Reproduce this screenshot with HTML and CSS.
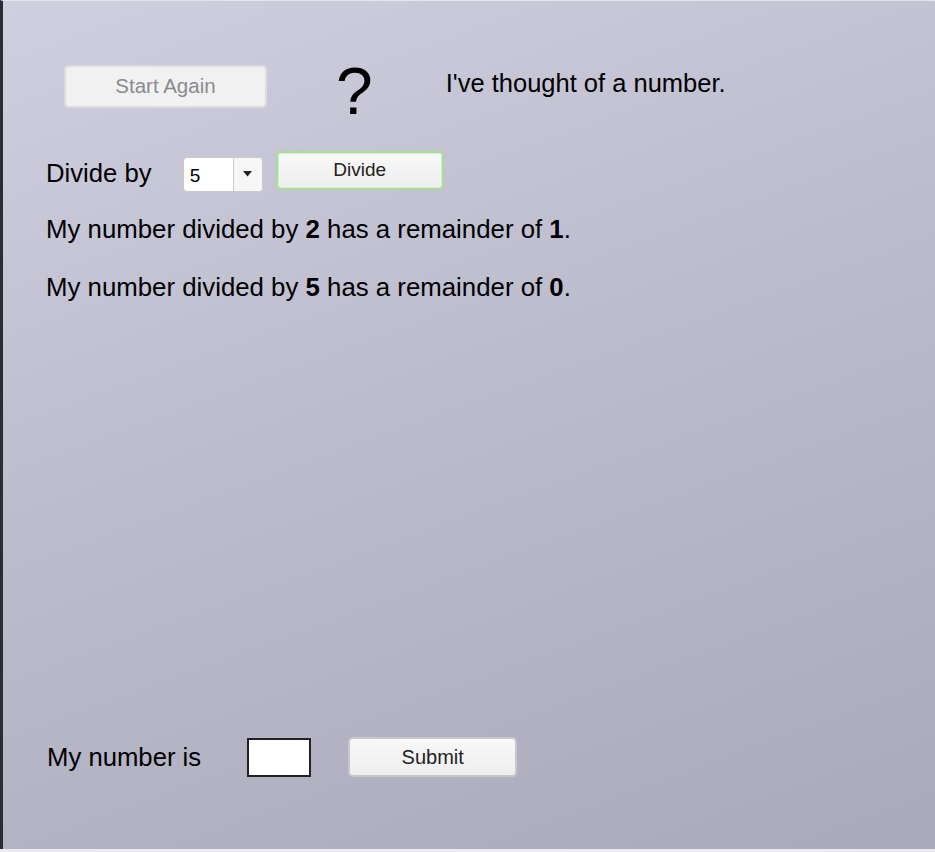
FILE: index.html
```html
<!DOCTYPE html>
<html lang="en">
<head>
  <meta charset="UTF-8" />
  <title>Remainders</title>
  <link rel="stylesheet" href="styles.css">
</head>
<body>

  <!-- GAME AREA -->
  <div class="stage">

    <!-- TOP ROW -->
    <div class="top-row">
      <button class="btn btn-start" disabled>Start Again</button>
      <span class="mystery">?</span>
      <span class="prompt">I've thought of a number.</span>
    </div>

    <!-- DIVIDE CONTROLS -->
    <div class="divide-row">
      <span class="label">Divide by</span>
      <div class="picker">
        <span class="picker-value">5</span>
        <span class="picker-arrow">
          <svg width="9" height="6" viewBox="0 0 9 6"><path d="M0 0h9L4.5 5.5z" fill="#222"/></svg>
        </span>
      </div>
      <button class="btn btn-divide">Divide</button>
    </div>

    <!-- RESULTS -->
    <div class="results">
      <p>My number divided by <b>2</b> has a remainder of <b>1</b>.</p>
      <p>My number divided by <b>5</b> has a remainder of <b>0</b>.</p>
    </div>

    <!-- ANSWER -->
    <div class="answer-row">
      <span class="label">My number is</span>
      <input class="answer" type="text">
      <button class="btn btn-submit">Submit</button>
    </div>

  </div>
  <div class="base"></div>

</body>
</html>
```

FILE: styles.css
```css
html, body {
  margin: 0;
  height: 100%;
}

body {
  font-family: "Liberation Sans", Arial, sans-serif;
  color: #000;
  background: #ececf0;
  overflow: hidden;
}

/* GAME AREA */
.stage {
  height: 849px;
  box-sizing: border-box;
  border-left: 3px solid #2c2c34;
  border-top: 1px solid #e4e4ec;
  background: linear-gradient(160deg, #d0cfe0 0%, #bdbccd 45%, #aaa9b9 100%);
  padding: 0 0 0 43px;
  display: flex;
  flex-direction: column;
}

.btn {
  font-family: "Liberation Sans", Arial, sans-serif;
  background: linear-gradient(#f8f8f8, #eeeeee);
  border: 2px solid #d6d6dc;
  border-radius: 5px;
  color: #222;
  padding: 0;
  cursor: pointer;
}

/* TOP ROW */
.top-row {
  display: flex;
  align-items: center;
  margin-top: 63px;
  height: 44px;
}

.btn-start {
  width: 203px;
  height: 43px;
  margin-left: 18px;
  font-size: 20.5px;
  color: #8a8a8e;
  background: #f1f1f1;
  border-color: #dcdce0;
}

.mystery {
  font-size: 66px;
  margin-left: 69px;
  margin-top: 10px;
  line-height: 1;
}

.prompt {
  font-size: 25.5px;
  margin-left: 73px;
  margin-top: -6px;
}

/* DIVIDE CONTROLS */
.divide-row {
  display: flex;
  align-items: center;
  margin-top: 42px;
  height: 40px;
}

.label {
  font-size: 25.7px;
}

.divide-row .label {
  margin-top: 6px;
}

.picker {
  display: flex;
  margin-left: 31px;
  margin-top: 8px;
  width: 80px;
  height: 35px;
  background: #fff;
  border: 1px solid #c9c9cf;
  border-radius: 4px;
  box-sizing: border-box;
}

.picker-value {
  flex: 1;
  font-size: 19px;
  line-height: 36px;
  padding-left: 6px;
  border-right: 1px solid #c9c9cf;
}

.picker-arrow {
  width: 28px;
  display: flex;
  align-items: center;
  justify-content: center;
  background: #f6f6f6;
  border-radius: 0 4px 4px 0;
}

.btn-divide {
  width: 168px;
  height: 39px;
  margin-left: 13px;
  font-size: 19px;
  border: 2px solid #a8dc98;
  box-shadow: inset 0 0 0 1px #d6f0cc;
}

/* RESULTS */
.results {
  margin-top: 25px;
}

.results p {
  font-size: 25.8px;
  margin: 0 0 30px 0;
  line-height: 28px;
}

/* ANSWER */
.answer-row {
  display: flex;
  align-items: center;
  margin-top: auto;
  margin-bottom: 72px;
  height: 40px;
}

.answer-row .label {
  margin-left: 1px;
}

.answer {
  width: 64px;
  height: 39px;
  box-sizing: border-box;
  margin-left: 46px;
  border: 2px solid #222;
  background: #fff;
  padding: 0;
}

.btn-submit {
  width: 169px;
  height: 40px;
  margin-left: 37px;
  font-size: 20px;
  border: 2px solid #c8c8cc;
}

.base {
  height: 3px;
  background: #ececf0;
}
```
